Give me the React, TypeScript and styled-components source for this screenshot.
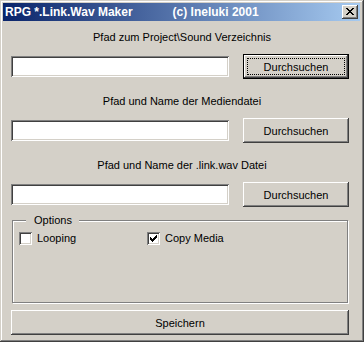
import React from "react";
import styled, { createGlobalStyle } from "styled-components";

const GlobalStyle = createGlobalStyle`
  html, body {
    margin: 0;
    padding: 0;
    background: #d4d0c8;
  }
`;

const FACE = "#d4d0c8";

const Window = styled.div`
  width: 364px;
  height: 342px;
  box-sizing: border-box;
  padding: 3px 4px 4px 3px;
  background: ${FACE};
  display: flex;
  flex-direction: column;
  box-shadow: inset -1px -1px #404040, inset 1px 1px ${FACE}, inset -2px -2px #808080, inset 2px 2px #ffffff;
  font-family: "Liberation Sans", Arial, sans-serif;
`;

const TitleBar = styled.div`
  height: 18px;
  display: flex;
  align-items: center;
  padding: 0 2px 0 2px;
  background: linear-gradient(to right, #0a246a, #a6caf0);
  color: #fff;
  font-weight: bold;
  font-size: 12px;
  white-space: nowrap;
`;

const TitleExtra = styled.span`
  margin-left: 40px;
`;

const CloseButton = styled.div`
  margin-left: auto;
  width: 16px;
  height: 14px;
  background: ${FACE};
  box-shadow: inset -1px -1px #404040, inset 1px 1px #ffffff, inset -2px -2px #808080, inset 2px 2px ${FACE};
  display: flex;
  align-items: flex-start;
  padding: 3px 0 0 4px;
  box-sizing: border-box;
`;

const Client = styled.div`
  flex: 1;
  padding: 10px 0 0 8px;
  display: flex;
  flex-direction: column;
  font-size: 11px;
  color: #000;
`;

const PathSection = styled.div`
  width: 338px;

  & + & {
    margin-top: 16px;
  }
`;

const Label = styled.div`
  text-align: center;
  line-height: 13px;
  padding-left: 4px;
  margin-bottom: 10px;
`;

const Row = styled.div`
  display: flex;
  align-items: center;
  gap: 14px;
`;

const Field = styled.input`
  width: 218px;
  height: 21px;
  box-sizing: border-box;
  border: none;
  outline: none;
  background: #fff;
  margin: 0;
  padding: 0 3px;
  font: inherit;
  box-shadow: inset 1px 1px #808080, inset -1px -1px #ffffff, inset 2px 2px #404040, inset -2px -2px ${FACE};
`;

const Button = styled.button<{ $default?: boolean; $wide?: boolean }>`
  position: relative;
  width: ${(p) => (p.$wide ? "338px" : "106px")};
  height: 25px;
  margin: 0;
  padding: 0;
  border: none;
  background: ${FACE};
  color: #000;
  font-family: "Liberation Sans", Arial, sans-serif;
  font-size: 11px;
  box-shadow: ${(p) =>
    p.$default
      ? `inset 0 0 0 1px #000, inset -2px -2px #404040, inset 2px 2px #ffffff, inset -3px -3px #808080`
      : `inset -1px -1px #404040, inset 1px 1px #ffffff, inset -2px -2px #808080, inset 2px 2px ${FACE}`};

  ${(p) =>
    p.$default &&
    `
    &::after {
      content: "";
      position: absolute;
      inset: 4px;
      border: 1px dotted #000;
    }
  `}
`;

const GroupBox = styled.fieldset`
  box-sizing: border-box;
  width: 336px;
  height: 89px;
  margin: 7px 0 0 1px;
  padding: 5px 6px;
  border: 1px solid #808080;
  box-shadow: inset 1px 1px #ffffff, 1px 1px #ffffff;
  min-inline-size: 0;
`;

const Legend = styled.legend`
  margin-left: 7px;
  padding: 0 7px 0 8px;
  line-height: 13px;
  background: ${FACE};
`;

const OptionRow = styled.div`
  display: flex;
  align-items: center;
`;

const Option = styled.label<{ $width?: number }>`
  display: flex;
  align-items: center;
  gap: 5px;
  width: ${(p) => (p.$width ? `${p.$width}px` : "auto")};
  line-height: 13px;
`;

const CheckBox = styled.span`
  width: 13px;
  height: 13px;
  box-sizing: border-box;
  background: #fff;
  padding: 3px 0 0 3px;
  box-shadow: inset 1px 1px #808080, inset -1px -1px #ffffff, inset 2px 2px #404040, inset -2px -2px ${FACE};
  display: block;
`;

const SaveArea = styled.div`
  margin-top: 7px;
`;

function CloseGlyph() {
  return (
    <svg width="8" height="7" viewBox="0 0 8 7" shapeRendering="crispEdges">
      <path
        d="M0 0h2v1H0zM6 0h2v1H6zM1 1h2v1H1zM5 1h2v1H5zM2 2h4v1H2zM3 3h2v1H3zM2 4h4v1H2zM1 5h2v1H1zM5 5h2v1H5zM0 6h2v1H0zM6 6h2v1H6z"
        fill="#000"
      />
    </svg>
  );
}

function CheckMark() {
  return (
    <svg width="7" height="7" viewBox="0 0 7 7" shapeRendering="crispEdges" style={{ display: "block" }}>
      <path d="M6 0h1v1H6zM5 1h2v1H5zM0 2h1v1H0zM4 2h3v1H4zM0 3h2v1H0zM3 3h3v1H3zM0 4h5v1H0zM1 5h3v1H1zM2 6h1v1H2z" fill="#000" />
    </svg>
  );
}

const paths = [
  { label: "Pfad zum Project\\Sound Verzeichnis", isDefault: true },
  { label: "Pfad und Name der Mediendatei", isDefault: false },
  { label: "Pfad und Name der .link.wav Datei", isDefault: false },
];

export default function App() {
  return (
    <>
      <GlobalStyle />
      <Window>
        <TitleBar>
          RPG *.Link.Wav Maker
          <TitleExtra>(c) Ineluki 2001</TitleExtra>
          <CloseButton>
            <CloseGlyph />
          </CloseButton>
        </TitleBar>
        <Client>
          {paths.map((p) => (
            <PathSection key={p.label}>
              <Label>{p.label}</Label>
              <Row>
                <Field type="text" />
                <Button $default={p.isDefault}>Durchsuchen</Button>
              </Row>
            </PathSection>
          ))}
          <GroupBox>
            <Legend>Options</Legend>
            <OptionRow>
              <Option $width={128}>
                <CheckBox />
                Looping
              </Option>
              <Option>
                <CheckBox>
                  <CheckMark />
                </CheckBox>
                Copy Media
              </Option>
            </OptionRow>
          </GroupBox>
          <SaveArea>
            <Button $wide>Speichern</Button>
          </SaveArea>
        </Client>
      </Window>
    </>
  );
}
